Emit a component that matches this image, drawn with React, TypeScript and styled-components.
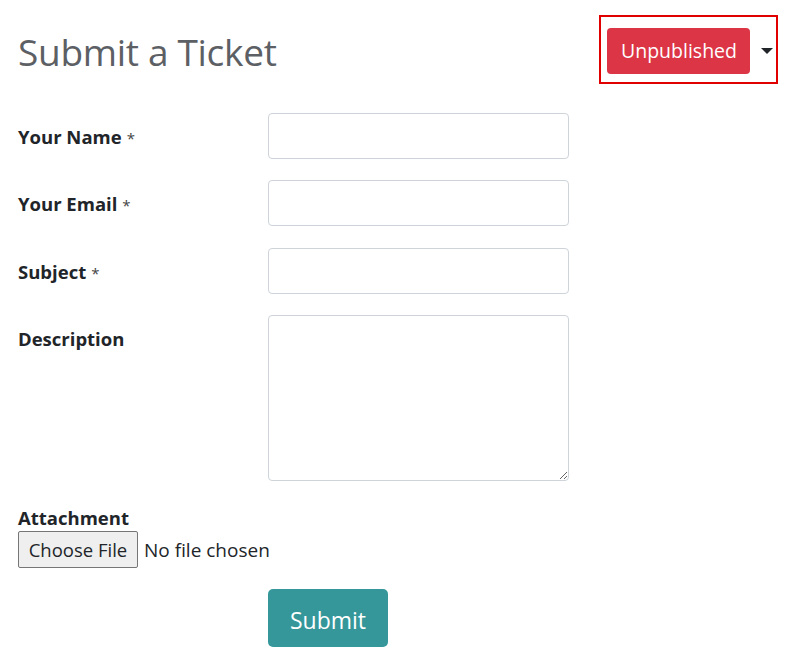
import React from 'react';
import styled, { createGlobalStyle } from 'styled-components';

const GlobalStyle = createGlobalStyle`
  html, body {
    margin: 0;
    padding: 0;
    background: #fff;
  }
  body {
    font-family: "Open Sans", "Noto Sans", sans-serif;
    color: #212529;
  }
`;

const Page = styled.div`
  padding: 15px 7px 0 18px;
`;

const Header = styled.div`
  display: flex;
  flex-direction: row;
  justify-content: space-between;
  align-items: flex-start;
`;

const Title = styled.h1`
  margin: 15px 0 0 0;
  font-size: 37px;
  font-weight: 500;
  line-height: 44px;
  color: #5c6064;
  letter-spacing: -0.3px;
`;

const PublishBox = styled.div`
  display: flex;
  flex-direction: row;
  align-items: center;
  box-sizing: border-box;
  width: 179px;
  height: 69px;
  border: 2px solid #e00000;
  padding: 2px 0 0 6px;
`;

const PublishButton = styled.button`
  box-sizing: border-box;
  flex-shrink: 0;
  width: 143px;
  height: 46px;
  background: #dc3545;
  border: none;
  border-radius: 4px;
  color: #fff;
  font-family: inherit;
  font-size: 19.5px;
  padding: 0 0 0 1px;
`;

const Caret = styled.span`
  flex-shrink: 0;
  margin-left: 11px;
  width: 0;
  height: 0;
  border-left: 6px solid transparent;
  border-right: 6px solid transparent;
  border-top: 6px solid #212529;
`;

const Form = styled.form`
  margin-top: 29px;
  display: flex;
  flex-direction: column;
`;

const FieldRow = styled.div<{ $gap: number }>`
  display: grid;
  grid-template-columns: 250px 301px;
  margin-bottom: ${p => p.$gap}px;
`;

const Label = styled.label`
  font-weight: 700;
  font-size: 18.5px;
  line-height: 24px;
  padding-top: 12px;
`;

const Required = styled.span`
  font-weight: 400;
  font-size: 15px;
  color: #444;
  margin-left: 5px;
`;

const Input = styled.input`
  box-sizing: border-box;
  height: 46px;
  border: 1px solid #ced4da;
  border-radius: 4px;
  font-family: inherit;
  font-size: 18px;
  padding: 0 14px;
`;

const TextArea = styled.textarea`
  box-sizing: border-box;
  height: 166px;
  border: 1px solid #ced4da;
  border-radius: 4px;
  font-family: inherit;
  font-size: 18px;
  padding: 8px 14px;
  display: block;
`;

const AttachLabel = styled.label`
  display: block;
  font-weight: 700;
  font-size: 18.5px;
  line-height: 24px;
  margin-top: 3px;
`;

const FileRow = styled.div`
  display: flex;
  flex-direction: row;
  align-items: center;
  gap: 6px;
  margin-top: 1px;
`;

const FileButton = styled.button`
  box-sizing: border-box;
  height: 37px;
  width: 120px;
  background: #efefef;
  border: 1px solid #767676;
  border-radius: 2px;
  font-family: inherit;
  font-size: 18.5px;
  color: #212529;
  padding: 0;
`;

const FileText = styled.span`
  font-size: 19px;
  color: #212529;
`;

const SubmitRow = styled.div`
  padding-left: 250px;
  margin-top: 21px;
`;

const SubmitButton = styled.button`
  box-sizing: border-box;
  width: 120px;
  height: 58px;
  background: #35979a;
  border: none;
  border-radius: 5px;
  color: #fff;
  font-family: inherit;
  font-size: 23px;
  padding: 3px 0 0 0;
`;

export default function App() {
  return (
    <>
      <GlobalStyle />
      <Page>
        <Header>
          <Title>Submit a Ticket</Title>
          <PublishBox>
            <PublishButton type="button">Unpublished</PublishButton>
            <Caret />
          </PublishBox>
        </Header>
        <Form onSubmit={e => e.preventDefault()}>
          <FieldRow $gap={21}>
            <Label>Your Name<Required>*</Required></Label>
            <Input type="text" />
          </FieldRow>
          <FieldRow $gap={22}>
            <Label>Your Email<Required>*</Required></Label>
            <Input type="email" />
          </FieldRow>
          <FieldRow $gap={21}>
            <Label>Subject<Required>*</Required></Label>
            <Input type="text" />
          </FieldRow>
          <FieldRow $gap={22}>
            <Label>Description</Label>
            <TextArea />
          </FieldRow>
          <AttachLabel>Attachment</AttachLabel>
          <FileRow>
            <FileButton type="button">Choose File</FileButton>
            <FileText>No file chosen</FileText>
          </FileRow>
          <SubmitRow>
            <SubmitButton type="submit">Submit</SubmitButton>
          </SubmitRow>
        </Form>
      </Page>
    </>
  );
}
